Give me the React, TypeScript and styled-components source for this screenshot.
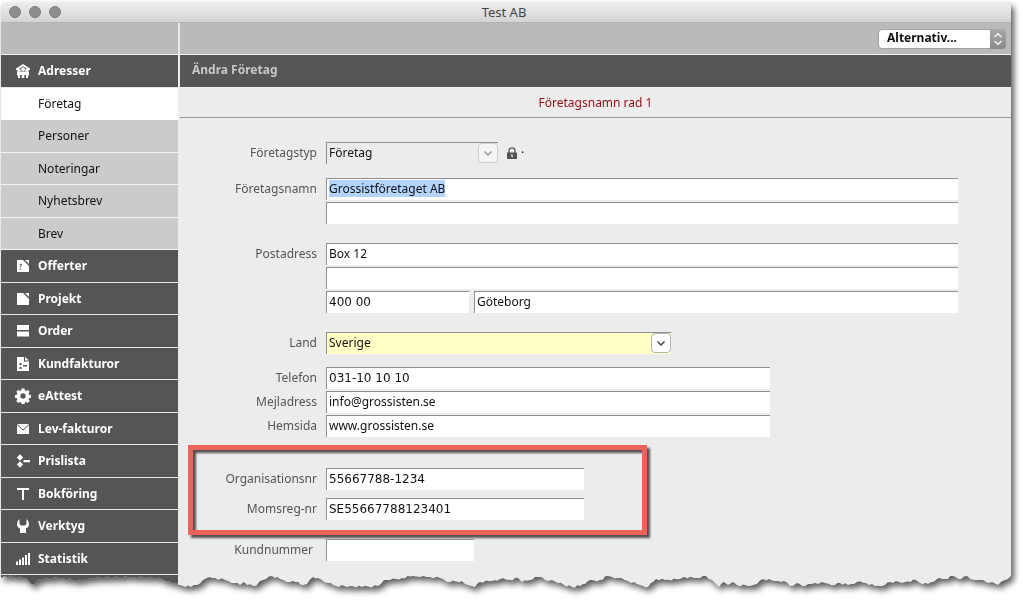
import React, { useEffect, useRef } from "react";
import styled, { createGlobalStyle, css } from "styled-components";

const GlobalStyle = createGlobalStyle`
  * { box-sizing: border-box; }
  body {
    margin: 0;
    background: #fff;
    font-family: "Noto Sans", "Open Sans", sans-serif;
    font-size: 12px;
    line-height: 16px;
    color: #111;
  }
  input, select, button { font: inherit; color: inherit; }
`;

/* Torn bottom edge: [x, distance from the bottom] on a 1010 unit wide sheet. */
const tear: [number, number][] = [
  [0, 12], [4, 14], [24, 12], [33, 5], [38, 11], [60, 12], [80, 9], [90, 12], [130, 13], [155, 12],
  [168, 9], [178, 5], [190, 3], [196, 5], [202, 10], [206, 12], [214, 12], [224, 10], [234, 7],
  [239, 5], [243, 8], [246, 5], [255, 4], [259, 9], [265, 11], [271, 14], [279, 11], [289, 8],
  [297, 8], [302, 5], [306, 6], [312, 13], [317, 12], [327, 7], [335, 4], [349, 4], [361, 3],
  [377, 4], [383, 10], [389, 10], [401, 12], [412, 14], [419, 13], [429, 13], [439, 12], [449, 8],
  [461, 9], [467, 5], [474, 3], [479, 8], [491, 9], [499, 11], [509, 10], [517, 12], [521, 8],
  [529, 10], [534, 13], [539, 13], [544, 10], [551, 10], [557, 7], [571, 3], [579, 4], [587, 9],
  [599, 10], [607, 14], [617, 12], [627, 9], [639, 5], [647, 3], [655, 11], [664, 10], [679, 11],
  [683, 13], [693, 12], [699, 12], [705, 14], [711, 10], [718, 3], [723, 8], [727, 5], [732, 8],
  [736, 5], [749, 4], [756, 6], [762, 11], [774, 9], [783, 9], [789, 4], [796, 7], [804, 4],
  [814, 7], [824, 7], [834, 5], [839, 7], [847, 5], [856, 8], [865, 7], [874, 4], [884, 5],
  [889, 8], [904, 8], [915, 10], [919, 7], [927, 6], [936, 11], [944, 11], [952, 14], [960, 11],
  [966, 14], [973, 10], [979, 10], [985, 8], [991, 8], [997, 5], [1004, 10], [1010, 14],
];

const roughTear = tear.flatMap(([x, y], i) => {
  const next = tear[i + 1];
  if (!next) return [[x, y]];
  const steps = Math.max(1, Math.round((next[0] - x) / 3));
  return Array.from({ length: steps }, (_, k) => {
    const t = k / steps;
    const notch = k === 0 ? 0 : ((i * 7 + k * 5) % 3) - 1;
    return [x + (next[0] - x) * t, y + (next[1] - y) * t + notch];
  });
});

const tearPolygon = [
  "0 0",
  "100% 0",
  ...roughTear.reverse().map(([x, y]) => `${((x / 1010) * 100).toFixed(2)}% calc(100% - ${y.toFixed(1)}px)`),
].join(", ");

const Sheet = styled.div`
  padding: 2px 12px 12px 1px;
  filter: drop-shadow(3px 4px 3px rgba(0, 0, 0, 0.65));
`;

const Window = styled.div`
  background: #ececec;
  border-radius: 5px 5px 0 0;
  overflow: hidden;
  clip-path: polygon(${tearPolygon});
`;

const TitleBar = styled.header`
  display: grid;
  grid-template-columns: 1fr auto 1fr;
  align-items: center;
  height: 21px;
  padding: 0 12px 0 8px;
  background: linear-gradient(#eeeeee, #d4d4d4);
  border-bottom: 1px solid #b4b4b4;
`;

const Lights = styled.div`
  display: flex;
  gap: 8px;
`;

const Light = styled.button`
  width: 12px;
  height: 12px;
  padding: 0;
  border: 1px solid #7c7c7c;
  border-radius: 50%;
  background: #8e8e8e;
`;

const WindowTitle = styled.h1`
  margin: 0;
  font-size: 13px;
  font-weight: 400;
  color: #444;
`;

const Columns = styled.div`
  display: grid;
  grid-template-columns: 177px minmax(0, 1fr);
  column-gap: 2px;
`;

const Side = styled.nav`
  display: flex;
  flex-direction: column;
  background: #555;
`;

const Toolbar = styled.div`
  display: flex;
  align-items: center;
  justify-content: flex-end;
  height: 32px;
  padding-right: 5px;
  background: #bababa;
  border-bottom: 1px solid #f4f4f4;
`;

const Menu = styled.ul`
  list-style: none;
  margin: 0;
  padding: 0;
`;

type Kind = "group" | "sub" | "current";

const kinds = {
  group: css`background: #555; color: #fff; font-weight: 700; border-color: #e6e6e6;`,
  sub: css`background: #cbcbcb; color: #111; border-color: #f4f4f4;`,
  current: css`background: #fff; color: #111; border-color: #fff;`,
};

const MenuItem = styled.li`
  height: 32px;
  &:nth-child(odd) { height: 33px; }
`;

const MenuLink = styled.a<{ $kind: Kind }>`
  display: grid;
  grid-template-columns: 16px 1fr;
  column-gap: 7px;
  align-items: center;
  height: 100%;
  padding-left: 14px;
  text-decoration: none;
  border-bottom: 1px solid;
  ${({ $kind }) => kinds[$kind]}
`;

const MenuText = styled.span`
  grid-column: 2;
`;

const Glyph = styled.svg`
  width: 16px;
  height: 16px;
  fill: currentColor;
`;

const Main = styled.main`
  display: flex;
  flex-direction: column;
`;

const Heading = styled.h2`
  display: flex;
  align-items: center;
  height: 33px;
  margin: 0;
  padding: 0 12px 2px;
  background: #555;
  border-bottom: 1px solid #f4f4f4;
  color: #c8c8c8;
  font-size: 12px;
  font-weight: 700;
`;

const RecordName = styled.p`
  margin: 0;
  padding: 7px 0 6px;
  border-bottom: 1px solid #999;
  text-align: center;
  color: #8f0f14;
`;

const Form = styled.form`
  display: flex;
  flex-direction: column;
  padding: 24px 53px 29px 0;
`;

const Group = styled.div<{ $before?: number; $gap?: number }>`
  position: relative;
  display: flex;
  flex-direction: column;
  gap: ${({ $gap = 2 }) => $gap}px;
  margin-top: ${({ $before = 0 }) => $before}px;
`;

const Row = styled.div`
  display: grid;
  grid-template-columns: 137px minmax(0, 1fr);
  column-gap: 9px;
  align-items: center;
`;

const Label = styled.label<{ $inset?: boolean }>`
  text-align: right;
  color: #555;
  padding-right: ${({ $inset }) => ($inset ? 4 : 0)}px;
`;

const Cells = styled.div`
  grid-column: 2;
  display: flex;
  align-items: center;
  gap: 5px;
`;

const fieldBox = css`
  height: 22px;
  margin: 0;
  padding: 0 2px 2px;
  border: solid #8f8f8f;
  border-width: 1px 0 0 1px;
  border-radius: 0;
  outline: none;
`;

const Input = styled.input<{ $width?: number; $numeric?: boolean }>`
  ${fieldBox}
  background: #fff;
  width: 100%;
  max-width: ${({ $width }) => ($width ? `${$width}px` : "none")};
  ${({ $numeric }) => $numeric && css`font-family: "DejaVu Sans", "Noto Sans", sans-serif;`}
  &::selection { background: #b3d5fd; color: #111; }
`;

const Picker = styled.div<{ $width: number }>`
  position: relative;
  width: 100%;
  max-width: ${({ $width }) => $width}px;
`;

const PickerSelect = styled.select<{ $tone: string }>`
  ${fieldBox}
  appearance: none;
  display: block;
  width: 100%;
  opacity: 1;
  color: #111;
  background: ${({ $tone }) => $tone};
`;

const PickerArrow = styled.span<{ $muted?: boolean }>`
  position: absolute;
  top: 1px;
  right: 0;
  display: grid;
  place-items: center;
  width: 20px;
  height: 20px;
  border: 1px solid ${({ $muted }) => ($muted ? "#d0d0d0" : "#b4b4b4")};
  border-radius: 4px;
  background: ${({ $muted }) => ($muted ? "#f5f5f5" : "#fff")};
  color: ${({ $muted }) => ($muted ? "#999" : "#444")};
  pointer-events: none;
`;

const Options = styled.div`
  position: relative;
`;

const OptionsSelect = styled.select`
  appearance: none;
  display: block;
  width: 128px;
  height: 20px;
  padding: 0 24px 1px 8px;
  border: 1px solid #a2a2a2;
  border-radius: 4px;
  background: #fff;
  font-weight: 700;
`;

const Stepper = styled.span`
  position: absolute;
  top: 0;
  right: 0;
  display: grid;
  place-items: center;
  width: 16px;
  height: 20px;
  border-radius: 0 4px 4px 0;
  background: linear-gradient(#a9a9a9, #8a8a8a);
  color: #f4f4f4;
  pointer-events: none;
`;

const Stroke = styled.svg`
  fill: none;
  stroke: currentColor;
  stroke-width: 1.5;
`;

const Lock = styled.span`
  display: flex;
  align-items: center;
  gap: 3px;
  padding-left: 3px;
`;

const Highlight = styled.div`
  position: absolute;
  top: -23px;
  bottom: -15px;
  left: 8px;
  width: 459px;
  border: 5px solid #ec6459;
  filter: drop-shadow(3px 3px 1px rgba(50, 40, 45, 0.8));
  pointer-events: none;
`;

const icons: Record<string, React.ReactNode> = {
  Adresser: (
    <>
      <path d="M1 5.500 8 1l7 4.500v1.500h-1L8 3.200 2 7H1z" />
      <circle cx="4" cy="7.300" r="1.700" /><circle cx="8" cy="6.200" r="1.900" /><circle cx="12" cy="7.300" r="1.700" />
      <path d="M2 8.500h12v4h-1V15h-2v-3H9.300v3H6.700v-3H5v3H3v-2.500H2z" />
    </>
  ),
  Offerter: (
    <>
      <path d="M2 2h6l6 6v6H2zM10 2h4v4z" />
      <path d="M4.500 6.500q2-1.200 2 .5 0 1-1.200 1.500v1M5.300 10.500v1.200" fill="none" stroke="#555" strokeWidth="1" />
    </>
  ),
  Projekt: <path d="M2 2h6l6 6v6H2zM10 2h4v4z" />,
  Order: <path d="M2 2h12v5H2zM2 8.500h12v5H2z" />,
  Kundfakturor: (
    <path
      fillRule="evenodd"
      d="M2 1h7v4.500h5V15H2zM10 1l4 3.500h-4zM4.500 7v2h2V7zM4.500 11v2h2v-2zM8 9v1.500h4V9z"
    />
  ),
  eAttest: (
    <path
      fillRule="evenodd"
      d="M6.500.5h3l.4 2 1 .4 1.800-1.200 2 2-1.200 1.800.4 1 2 .4v3l-2 .4-.4 1 1.200 1.800-2 2-1.800-1.200-1 .4-.4 2h-3l-.4-2-1-.4-1.800 1.200-2-2 1.200-1.800-.4-1-2-.4v-3l2-.4.4-1L1.300 3.700l2-2 1.800 1.200 1-.4zM8 5.300a2.700 2.700 0 1 0 0 5.400 2.700 2.700 0 0 0 0-5.400z"
    />
  ),
  "Lev-fakturor": (
    <>
      <path d="M2 3h12v10H2z" />
      <path d="M2 3.500 8 9l6-5.500" fill="none" stroke="#555" strokeWidth="1" />
    </>
  ),
  Prislista: (
    <path d="M5 1.200 8.200 4.500 5 7.800 1.800 4.500zM5 8.200l3.200 3.300L5 14.800l-3.200-3.300zM8.500 7H15v2.200H8.500z" />
  ),
  "Bokföring": <path d="M2 2h12v2H9v10H7V4H2z" />,
  Verktyg: <path d="M4.500 1v5L6 7.500h4L11.500 6V1Q14 3 14 6q0 3-3 4.500V15H5v-4.500Q2 9 2 6q0-3 2.500-5z" />,
  Statistik: (
    <path d="M1 10.500h2V14H1zM4 8.500h2V14H4zM7 6.500h2V14H7zM10 4h2v10h-2zM13 2h2v12h-2z" />
  ),
};

const menu: [string, Kind][] = [
  ["Adresser", "group"],
  ["Företag", "current"],
  ["Personer", "sub"],
  ["Noteringar", "sub"],
  ["Nyhetsbrev", "sub"],
  ["Brev", "sub"],
  ["Offerter", "group"],
  ["Projekt", "group"],
  ["Order", "group"],
  ["Kundfakturor", "group"],
  ["eAttest", "group"],
  ["Lev-fakturor", "group"],
  ["Prislista", "group"],
  ["Bokföring", "group"],
  ["Verktyg", "group"],
  ["Statistik", "group"],
];

const Chevron = () => (
  <Stroke width="10" height="10" viewBox="0 0 10 10"><path d="M1.500 3.500 5 7l3.500-3.500" /></Stroke>
);

export default function App() {
  const nameField = useRef<HTMLInputElement>(null);

  useEffect(() => {
    nameField.current?.focus();
    nameField.current?.select();
  }, []);

  return (
    <>
      <GlobalStyle />
      <Sheet>
        <Window>
          <TitleBar>
            <Lights>
              <Light aria-label="Stäng" />
              <Light aria-label="Minimera" />
              <Light aria-label="Zooma" />
            </Lights>
            <WindowTitle>Test AB</WindowTitle>
          </TitleBar>
          <Columns>
            <Side>
              <Toolbar />
              <Menu>
                {menu.map(([name, kind]) => (
                  <MenuItem key={name}>
                    <MenuLink href="#" $kind={kind}>
                      {icons[name] && <Glyph viewBox="0 0 16 16" aria-hidden="true">{icons[name]}</Glyph>}
                      <MenuText>{name}</MenuText>
                    </MenuLink>
                  </MenuItem>
                ))}
              </Menu>
            </Side>
            <Main>
              <Toolbar>
                <Options>
                  <OptionsSelect aria-label="Alternativ">
                    <option>Alternativ...</option>
                  </OptionsSelect>
                  <Stepper>
                    <Stroke width="10" height="14" viewBox="0 0 10 14"><path d="M1.500 5 5 1.800 8.500 5M1.500 9 5 12.200 8.500 9" /></Stroke>
                  </Stepper>
                </Options>
              </Toolbar>
              <Heading>Ändra Företag</Heading>
              <RecordName>Företagsnamn rad 1</RecordName>
              <Form>
                <Group>
                  <Row>
                    <Label htmlFor="typ">Företagstyp</Label>
                    <Cells>
                      <Picker $width={172}>
                        <PickerSelect id="typ" $tone="#ececec" disabled>
                          <option>Företag</option>
                        </PickerSelect>
                        <PickerArrow $muted><Chevron /></PickerArrow>
                      </Picker>
                      <Lock>
                        <svg width="12" height="12" viewBox="0 0 12 12" aria-hidden="true">
                          <path d="M3 6V3.500a3 2.700 0 0 1 6 0V6" fill="none" stroke="#555" strokeWidth="1.300" />
                          <path fillRule="evenodd" fill="#555" d="M1 5.500h10V12H1zM5 7.500v1h.5v1.800h1.200V7.500z" />
                        </svg>
                        <span>·</span>
                      </Lock>
                    </Cells>
                  </Row>
                </Group>
                <Group $before={14}>
                  <Row>
                    <Label htmlFor="namn">Företagsnamn</Label>
                    <Input id="namn" ref={nameField} defaultValue="Grossistföretaget AB" />
                  </Row>
                  <Row>
                    <Cells><Input aria-label="Företagsnamn rad 2" /></Cells>
                  </Row>
                </Group>
                <Group $before={19}>
                  <Row>
                    <Label htmlFor="post">Postadress</Label>
                    <Input id="post" defaultValue="Box 12" />
                  </Row>
                  <Row>
                    <Cells><Input aria-label="Postadress rad 2" /></Cells>
                  </Row>
                  <Row>
                    <Cells>
                      <Input $width={143} $numeric aria-label="Postnummer" defaultValue="400 00" />
                      <Input aria-label="Ort" defaultValue="Göteborg" />
                    </Cells>
                  </Row>
                </Group>
                <Group $before={19}>
                  <Row>
                    <Label htmlFor="land">Land</Label>
                    <Picker $width={345}>
                      <PickerSelect id="land" $tone="#ffffc6">
                        <option>Sverige</option>
                      </PickerSelect>
                      <PickerArrow><Chevron /></PickerArrow>
                    </Picker>
                  </Row>
                </Group>
                <Group $before={13}>
                  <Row>
                    <Label htmlFor="tel">Telefon</Label>
                    <Input id="tel" $width={444} $numeric defaultValue="031-10 10 10" />
                  </Row>
                  <Row>
                    <Label htmlFor="mejl">Mejladress</Label>
                    <Input id="mejl" $width={444} defaultValue="info@grossisten.se" />
                  </Row>
                  <Row>
                    <Label htmlFor="hemsida">Hemsida</Label>
                    <Input id="hemsida" $width={444} defaultValue="www.grossisten.se" />
                  </Row>
                </Group>
                <Group $before={31} $gap={8}>
                  <Row>
                    <Label htmlFor="orgnr">Organisationsnr</Label>
                    <Input id="orgnr" $width={258} $numeric defaultValue="55667788-1234" />
                  </Row>
                  <Row>
                    <Label htmlFor="moms">Momsreg-nr</Label>
                    <Input id="moms" $width={258} $numeric defaultValue="SE55667788123401" />
                  </Row>
                  <Highlight />
                </Group>
                <Group $before={19}>
                  <Row>
                    <Label htmlFor="kundnr" $inset>Kundnummer</Label>
                    <Input id="kundnr" $width={148} $numeric />
                  </Row>
                </Group>
              </Form>
            </Main>
          </Columns>
        </Window>
      </Sheet>
    </>
  );
}
